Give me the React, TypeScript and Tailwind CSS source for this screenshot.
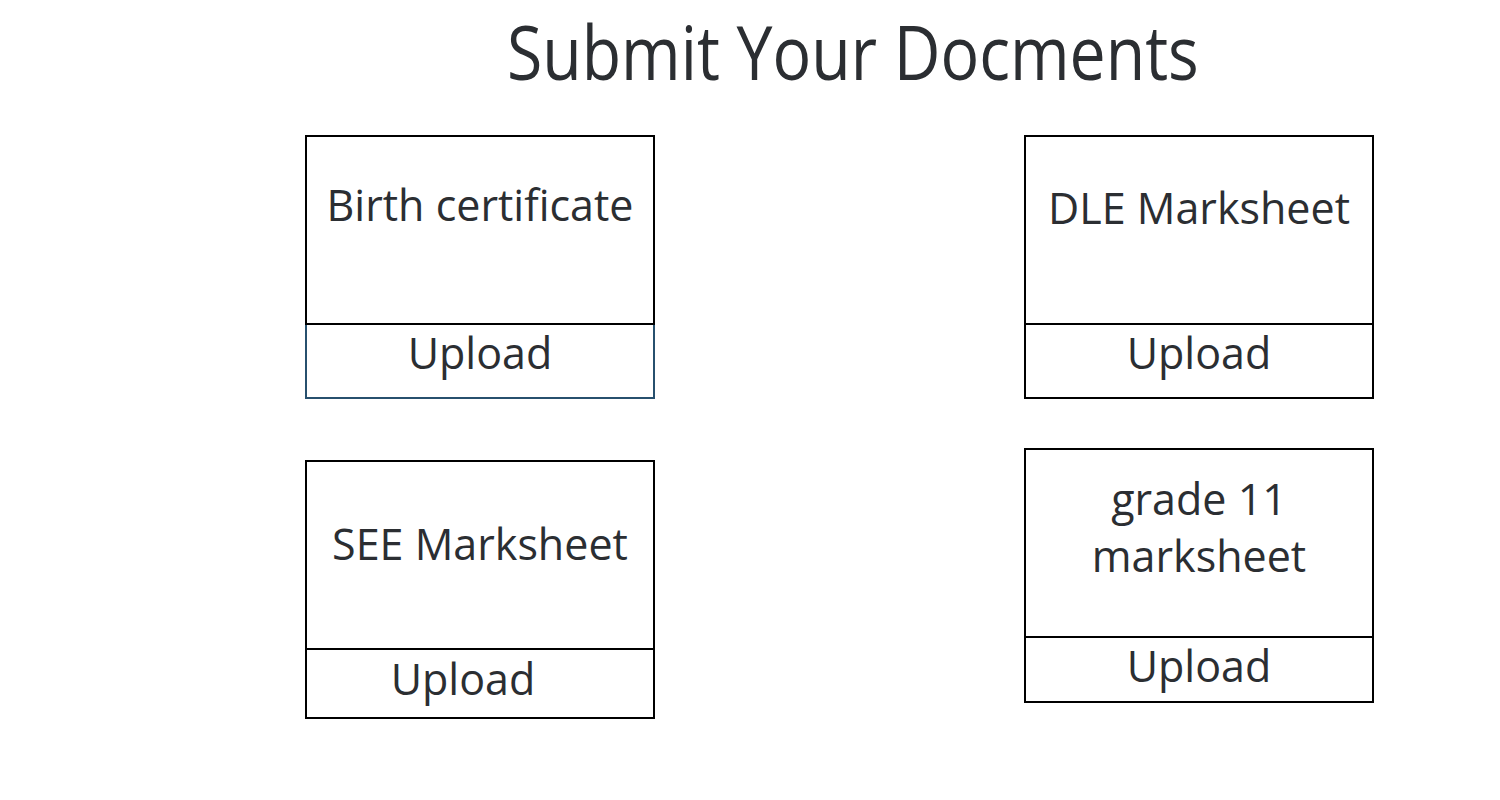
export default function App() {
  return (
    <div className="w-[1500px] h-[800px] bg-white text-[#2b2e32]" style={{ fontFamily: '"Open Sans", sans-serif' }}>
      <h1 className="pl-[507px] pt-[3px] text-[75px] leading-[96px] font-normal">
        <span className="inline-block origin-left scale-x-[0.858]">Submit Your Docments</span>
      </h1>
      <div className="flex pl-[305px] pt-[36px] gap-x-[369px] items-start">
        <div className="flex flex-col gap-y-[61px]">
          <DocCard title="Birth certificate" padTop="pt-[39px]" uploadHeight="h-[76px]" uploadPad="pt-0" uploadBorder="border-[#27506e]" />
          <DocCard title="SEE Marksheet" padTop="pt-[53px]" uploadHeight="h-[71px]" uploadPad="pt-[1px]" uploadShift="pr-[34px]" />
        </div>
        <div className="flex flex-col gap-y-[49px]">
          <DocCard title="DLE Marksheet" padTop="pt-[42px]" uploadHeight="h-[76px]" uploadPad="pt-0" />
          <DocCard title={'grade 11\nmarksheet'} padTop="pt-[20px]" uploadHeight="h-[67px]" uploadPad="pt-0" />
        </div>
      </div>
    </div>
  )
}

function DocCard({
  title,
  padTop,
  uploadHeight,
  uploadPad,
  uploadBorder = 'border-black',
  uploadShift = '',
}: {
  title: string
  padTop: string
  uploadHeight: string
  uploadPad: string
  uploadBorder?: string
  uploadShift?: string
}) {
  return (
    <div className="w-[350px]">
      <div className={`h-[190px] border-2 border-black text-center text-[43px] leading-[57px] whitespace-pre-line ${padTop}`}>
        {title}
      </div>
      <div className={`-mt-[2px] border-2 border-t-0 ${uploadBorder} ${uploadHeight} ${uploadShift} text-center text-[43px] leading-[56px]`}>
        <div className="border-t-2 border-black -mx-[2px]" />
        <div className={uploadPad}>Upload</div>
      </div>
    </div>
  )
}
